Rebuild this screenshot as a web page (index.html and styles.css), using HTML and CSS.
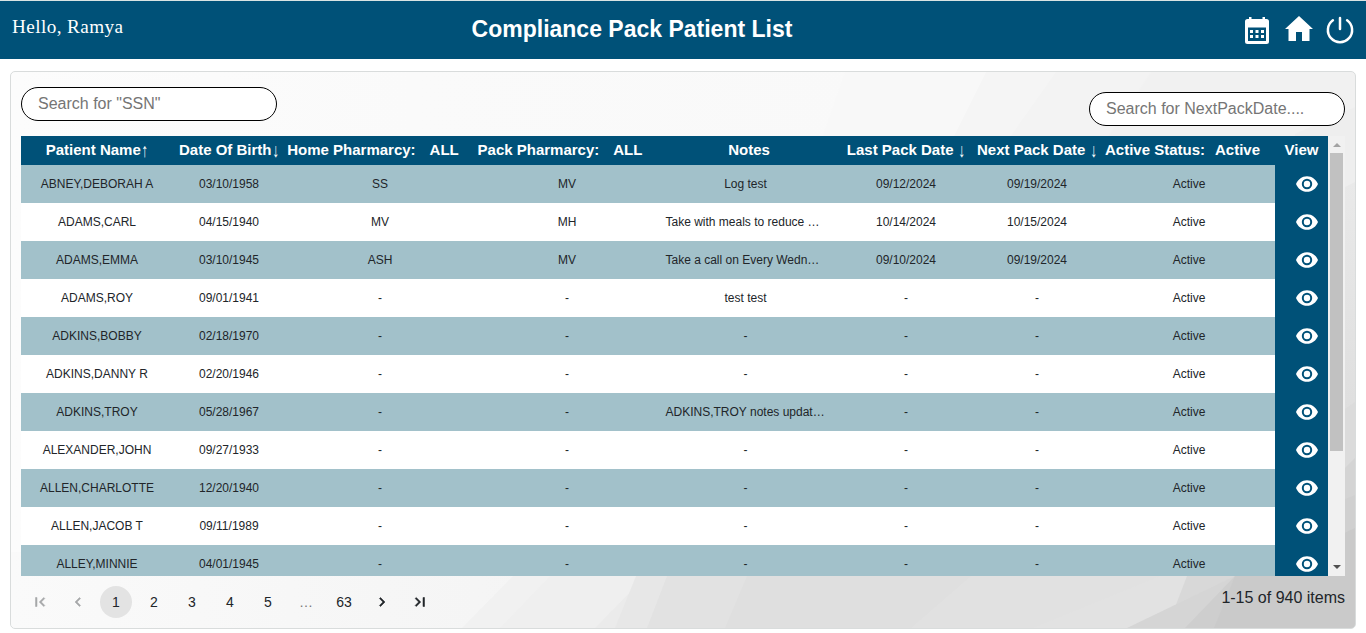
FILE: index.html
```
<!DOCTYPE html>
<html lang="en">
<head>
<meta charset="utf-8">
<title>Compliance Pack Patient List</title>
<link rel="stylesheet" href="styles.css">
</head>
<body>
<header class="topbar">
  <div class="greeting">Hello, Ramya</div>
  <h1 class="title">Compliance Pack Patient List</h1>
  <nav class="actions">
    <svg class="icon-calendar" viewBox="0 0 24 27"><path fill="#fff" fill-rule="evenodd" d="M4 0h2.500v2h11V0H20v2h1.500a2.500 2.500 0 0 1 2.500 2.500v20a2.500 2.500 0 0 1-2.500 2.500h-19A2.500 2.500 0 0 1 0 24.500v-20A2.500 2.500 0 0 1 2.500 2H4zM3 10.500V24h18V10.500z"/><path fill="#fff" d="M5 13h3v3H5zm5.500 0h3v3h-3zm5.500 0h3v3h-3zM5 18h3v3H5zm5.500 0h3v3h-3zm5.500 0h3v3h-3z"/></svg>
    <svg class="icon-home" viewBox="0 0 28 25"><path fill="#fff" d="M14 0 28 13h-3.500v12H17v-9h-6v9H3.500V13H0z"/></svg>
    <svg class="icon-power" viewBox="0 0 28 28"><path fill="none" stroke="#fff" stroke-width="2.500" stroke-linecap="round" d="M6.900 4.300a12.100 12.100 0 1 0 14.200 0M14 2v11"/></svg>
  </nav>
</header>

<main class="panel">
  <svg class="backdrop" viewBox="0 0 1344 556" preserveAspectRatio="none">
    <defs>
      <linearGradient id="base" x1="0" y1="0" x2="1" y2="0"><stop offset="0" stop-color="#fcfcfc"/><stop offset=".3" stop-color="#fafafa"/><stop offset="1" stop-color="#f8f8f8"/></linearGradient>
      <linearGradient id="low" x1="0" y1="0" x2="1" y2="0"><stop offset="0" stop-color="#fafafa"/><stop offset="1" stop-color="#f4f4f4"/></linearGradient>
      <linearGradient id="side" x1="0" y1="0" x2="0" y2="1"><stop offset="0" stop-color="#e9e9e9"/><stop offset="1" stop-color="#dedede"/></linearGradient>
    </defs>
    <path fill="url(#base)" d="M0 0h1344v556H0z"/>
    <path fill="#f8f8f8" d="M834 0h510v120H792z"/>
    <path fill="#f5f5f5" d="M975 0h369v120H915z"/>
    <path fill="#f3f3f3" d="M1045 0h299v120H960z"/>
    <path fill="#f1f1f1" d="M1140 0h204v120h-284z"/>
    <path fill="#eeeeee" d="M1344 35v110h-60V62z"/>
    <path fill="url(#side)" d="M1344 110v240h-30V125z"/>
    <path fill="#dbdbdb" d="M1344 330v226h-30V337l20 0z"/>
    <path fill="#d4d4d4" d="M1344 386v170h-30V416z"/>
    <path fill="#d0d0d0" d="M1344 423v133h-30V435z"/>
    <path fill="#cacaca" d="M1344 456v100h-30v-86z"/>
    <path fill="url(#low)" d="M0 480h560v76H0z"/>
    <path fill="#f1f1f1" d="M502 504h812v52H451z"/>
    <path fill="#efefef" d="M539 504h775v52H489z"/>
    <path fill="#ebebeb" d="M635 504h679v52H584z"/>
    <path fill="#e7e7e7" d="M625 504h689v52H604z"/>
    <path fill="#e2e2e2" d="M656 504h658v52H636z"/>
    <path fill="#dfdfdf" d="M736 504h578v52H714z"/>
    <path fill="#e1e1e1" d="M960 504h354v52H900z"/>
    <path fill="#e2e2e2" d="M1149 504h165v52h-292z"/>
    <path fill="#d8d8d8" d="M1176 504h138v52h-158z"/>
    <path fill="#d5d5d5" d="M1224 504h90v52h-198z"/>
    <path fill="#cecece" d="M1224 504h90v52h-140z"/>
    <path fill="#cacaca" d="M1224 504h120v52h-141z"/>
  </svg>

  <div class="filters">
    <input class="search" type="text" placeholder='Search for "SSN"'>
    <input class="search search-date" type="text" placeholder="Search for NextPackDate....">
  </div>

  <div class="grid-wrap">
    <div class="grid-view">
      <table class="patients">
        <colgroup><col class="c-name"><col class="c-dob"><col class="c-home"><col class="c-pack"><col class="c-notes"><col class="c-last"><col class="c-next"><col class="c-status"><col class="c-view"></colgroup>
        <thead><tr><th>Patient Name<span class="arrow">↑</span></th><th>Date Of Birth<span class="arrow">↓</span></th><th class="filtered">Home Pharmarcy:<span class="choice">ALL</span></th><th class="filtered">Pack Pharmarcy:<span class="choice">ALL</span></th><th class="notes">Notes</th><th>Last Pack Date <span class="arrow">↓</span></th><th>Next Pack Date <span class="arrow">↓</span></th><th class="filtered status">Active Status:<span class="choice choice-near">Active</span></th><th>View</th></tr></thead>
        <tbody id="rows"></tbody>
      </table>
    </div>
    <div class="scroll"><i class="up"></i><i class="thumb"></i><i class="down"></i></div>
  </div>

  <footer class="footer">
    <div class="pager">
      <span class="off"><svg viewBox="0 0 24 24"><path d="M18.410 16.590 13.820 12l4.590-4.590L17 6l-6 6 6 6zM6 6h2v12H6z"/></svg></span>
      <span class="off"><svg viewBox="0 0 24 24"><path d="M15.410 7.410 14 6l-6 6 6 6 1.410-1.410L10.830 12z"/></svg></span>
      <span class="current">1</span><span>2</span><span>3</span><span>4</span><span>5</span><span class="gap">…</span><span>63</span>
      <span><svg viewBox="0 0 24 24"><path d="M10 6 8.590 7.410 13.170 12l-4.580 4.590L10 18l6-6z"/></svg></span>
      <span><svg viewBox="0 0 24 24"><path d="M5.590 7.410 10.180 12l-4.590 4.590L7 18l6-6-6-6zM16 6h2v12h-2z"/></svg></span>
    </div>
    <div class="summary">1-15 of 940 items</div>
  </footer>
</main>
<script src="app.js"></script>
</body>
</html>
```
FILE: styles.css
```
* { box-sizing: border-box; }
body { margin: 0; height: 633px; overflow: hidden; background: #fff; font-family: "Liberation Sans", Arial, sans-serif; color: #212529; }
.topbar { height: 59px; border-top: 1px solid #d9e3e3; background: #005178; color: #fff; display: grid; grid-template-columns: 440px 384px 1fr; }
.greeting { font: 19.2px/24px "Liberation Serif", serif; padding: 14px 0 0 12px; letter-spacing: .4px; }
.title { margin: 0; padding-top: 14px; font-size: 23px; line-height: 28px; font-weight: 700; text-align: center; white-space: nowrap; }
.actions { display: flex; justify-content: flex-end; align-items: flex-start; padding: 15px 12px 0 0; }
.actions svg { display: block; flex: none; }
.icon-calendar { width: 24px; height: 27px; margin: 1px 16px 0 0; }
.icon-home { width: 28px; height: 25px; margin-right: 13px; }
.icon-power { width: 28px; height: 28px; }
.panel { position: relative; margin: 12px 10px 0; height: 558px; border: 1px solid #d9dcdc; border-radius: 5px; padding: 15px 10px 0; overflow: hidden; }
.backdrop { position: absolute; z-index: -1; inset: 0; width: 100%; height: 100%; }
.filters { display: flex; justify-content: space-between; height: 49px; }
.search { width: 256px; height: 34px; border: 1px solid #000; border-radius: 17px; padding: 0 16px; background: #fff; font: 16px "Liberation Sans", Arial, sans-serif; }
.search::placeholder { color: #757575; opacity: 1; }
.search-date { margin-top: 5px; }
.grid-wrap { display: flex; height: 440px; }
.grid-view { width: 1307px; overflow: hidden; }
.patients { width: 1307px; table-layout: fixed; border-collapse: collapse; }
.c-name { width: 152px; } .c-dob { width: 112px; } .c-home { width: 190px; } .c-pack { width: 184px; } .c-notes { width: 182px; }
.c-last { width: 130px; } .c-next { width: 132px; } .c-status { width: 172px; } .c-view { width: 53px; }
.patients th { height: 29px; padding: 0 0 2px; background: #005178; color: #fff; font-size: 15px; line-height: 20px; white-space: nowrap; }
.patients th.filtered { padding-right: 14px; }
.patients th.status { padding-right: 13px; }
.patients th.notes { padding-right: 2px; }
.arrow { display: inline-block; line-height: 16px; transform: translateY(.800px) scale(.9, 1.300); }
.choice { margin-left: 14px; }
.choice-near { margin-left: 10px; }
.patients td { height: 38px; padding: 0; background: #fff; font-size: 12px; text-align: center; white-space: nowrap; }
.patients tbody tr:nth-child(odd) td { background: #a2c1ca; }
.patients td:nth-child(5) { padding-right: 9px; }
.patients td.clipped { text-align: left; padding-left: 6.500px; }
.patients tbody tr td.view { background: #005178; padding-left: 10px; }
.eye { display: block; width: 22px; height: 16px; margin: 0 auto; }
.scroll { width: 17px; background: #f1f1f1; display: flex; flex-direction: column; align-items: center; }
.up, .down { border: 4px solid transparent; border-top: 0; border-bottom: 4px solid #a3a3a3; margin: 7px 0 6px; }
.thumb { width: 13px; height: 298px; background: #c1c1c1; }
.down { border-bottom: 0; border-top: 4px solid #505050; margin: auto 0 7px; }
.footer { display: flex; justify-content: space-between; padding-top: 10px; }
.pager { display: flex; gap: 6px; font: 14px "Liberation Sans", Arial, sans-serif; padding-left: 3px; }
.pager span { width: 32px; height: 32px; border-radius: 16px; display: flex; align-items: center; justify-content: center; }
.pager svg { width: 18px; height: 18px; fill: #212529; stroke: #212529; stroke-width: .7; }
.pager .off { opacity: .38; }
.pager .gap { color: #777; }
.pager .current { background: #e3e3e3; }
.summary { font-size: 16px; line-height: 24px; }
```
FILE: app.js
```
const rows = [
  ["ABNEY,DEBORAH A", "03/10/1958", "SS", "MV", "Log test", "09/12/2024", "09/19/2024"],
  ["ADAMS,CARL", "04/15/1940", "MV", "MH", "Take with meals to reduce …", "10/14/2024", "10/15/2024"],
  ["ADAMS,EMMA", "03/10/1945", "ASH", "MV", "Take a call on Every Wedn…", "09/10/2024", "09/19/2024"],
  ["ADAMS,ROY", "09/01/1941", "-", "-", "test test", "-", "-"],
  ["ADKINS,BOBBY", "02/18/1970", "-", "-", "-", "-", "-"],
  ["ADKINS,DANNY R", "02/20/1946", "-", "-", "-", "-", "-"],
  ["ADKINS,TROY", "05/28/1967", "-", "-", "ADKINS,TROY notes updat…", "-", "-"],
  ["ALEXANDER,JOHN", "09/27/1933", "-", "-", "-", "-", "-"],
  ["ALLEN,CHARLOTTE", "12/20/1940", "-", "-", "-", "-", "-"],
  ["ALLEN,JACOB T", "09/11/1989", "-", "-", "-", "-", "-"],
  ["ALLEY,MINNIE", "04/01/1945", "-", "-", "-", "-", "-"]
];
const eye = '<svg class="eye" viewBox="1 4 22 16"><path fill="#fff" d="M12 4.200C7 4.200 2.730 7.610 1 12c1.730 4.390 6 7.800 11 7.800s9.270-3.410 11-7.800c-1.730-4.390-6-7.800-11-7.800z"/><circle cx="12" cy="12" r="4.200" fill="none" stroke="#005178" stroke-width="2"/></svg>';
const cell = text => (text.endsWith("…") ? '<td class="clipped">' : "<td>") + text + "</td>";
document.getElementById("rows").innerHTML = rows.map(r =>
  "<tr>" + r.concat("Active").map(cell).join("") + '<td class="view">' + eye + "</td></tr>"
).join("");
```
